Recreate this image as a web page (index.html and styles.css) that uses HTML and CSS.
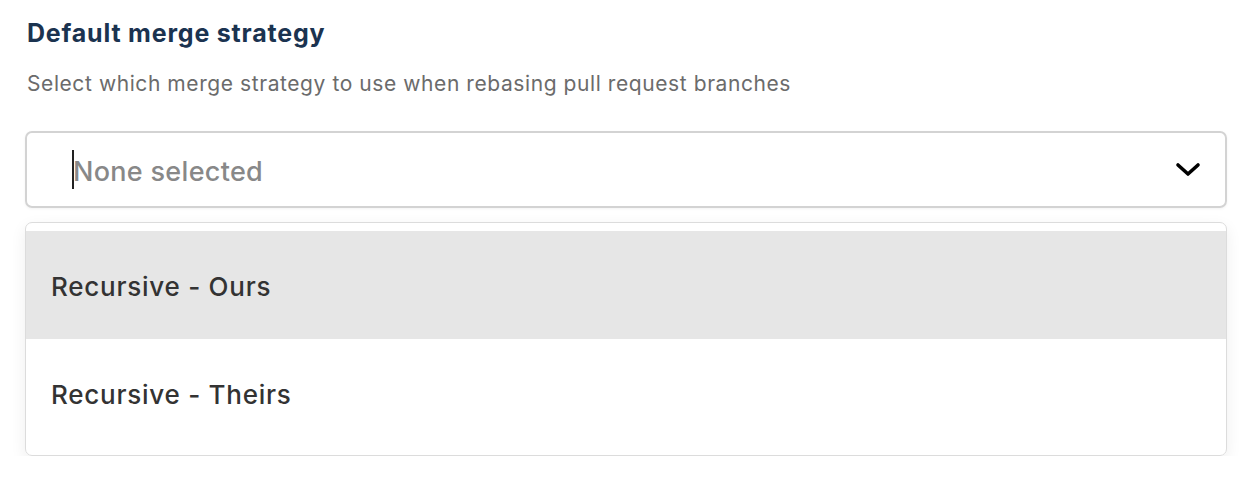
FILE: index.html
```html
<!DOCTYPE html>
<html>
<head>
<meta charset="utf-8">
<link rel="stylesheet" href="styles.css">
</head>
<body>
<div class="field">
  <h2 class="title">Default merge strategy</h2>
  <p class="desc">Select which merge strategy to use when rebasing pull request branches</p>
  <div class="select">
    <span class="caret"></span>
    <span class="placeholder">None selected</span>
    <svg class="chevron" width="26" height="16" viewBox="0 0 26 16"><path d="M3 3 L13 12 L23 3" fill="none" stroke="#000" stroke-width="3.6" stroke-linecap="round" stroke-linejoin="round"/></svg>
  </div>
  <ul class="menu">
    <li class="option active">Recursive - Ours</li>
    <li class="option">Recursive - Theirs</li>
  </ul>
</div>
</body>
</html>
```
FILE: styles.css
```css
html, body { margin: 0; padding: 0; background: #fff; }
body { font-family: Inter, "Noto Sans", sans-serif; }
.field { display: flex; flex-direction: column; padding: 18px 29px 0 25px; }
.title { margin: 0 0 0 2px; font-size: 25px; line-height: 30px; font-weight: 700; color: #1b3350; letter-spacing: 0.8px; }
.desc { margin: 22px 0 0 2px; font-size: 21px; line-height: 28px; color: #6b6b6b; letter-spacing: 0.58px; }
.select {
  margin-top: 33px; height: 73px; border: 2px solid #d3d3d3; border-radius: 7px;
  display: flex; align-items: center; padding: 0 24px 0 45px; box-sizing: content-box;
  box-shadow: 0 1px 3px rgba(0,0,0,0.05);
}
.caret { width: 2px; height: 39px; background: #222; }
.placeholder { flex: 1; font-size: 27px; font-weight: 500; color: #888; letter-spacing: 0.3px; margin-left: -1px; padding-top: 3px; }
.chevron { display: block; }
.menu {
  list-style: none; margin: 14px 0 0; padding: 8px 0; border: 1px solid #dcdcdc; border-radius: 7px;
  box-shadow: 0 5px 16px rgba(0,0,0,0.07);
}
.option { height: 108px; display: flex; align-items: center; padding-left: 25px; padding-top: 2px; box-sizing: border-box; font-size: 26px; font-weight: 500; color: #333; letter-spacing: 0.75px; }
.option.active { background: #e6e6e6; }
```
